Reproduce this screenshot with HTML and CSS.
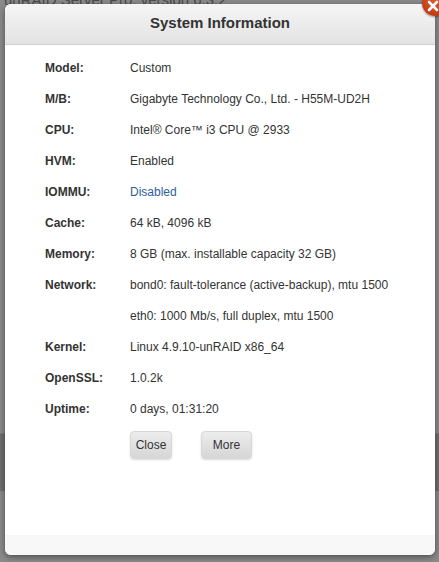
FILE: index.html
```html
<!DOCTYPE html>
<html>
<head>
<meta charset="utf-8">
<link rel="stylesheet" href="styles.css">
</head>
<body>
<div class="page">
  <div class="page-title">unRAID Server Pro, version 6.3.2</div>
  <div class="page-band"></div>
</div>
<div class="modal">
  <div class="modal-head">System Information</div>
  <div class="modal-body">
    <div class="info">
      <div class="lbl">Model:</div><div class="val">Custom</div>
      <div class="lbl">M/B:</div><div class="val">Gigabyte Technology Co., Ltd. - H55M-UD2H</div>
      <div class="lbl">CPU:</div><div class="val">Intel® Core™ i3 CPU @ 2933</div>
      <div class="lbl">HVM:</div><div class="val">Enabled</div>
      <div class="lbl">IOMMU:</div><div class="val link">Disabled</div>
      <div class="lbl">Cache:</div><div class="val">64 kB, 4096 kB</div>
      <div class="lbl">Memory:</div><div class="val">8 GB (max. installable capacity 32 GB)</div>
      <div class="lbl">Network:</div><div class="val">bond0: fault-tolerance (active-backup), mtu 1500</div>
      <div class="lbl"></div><div class="val">eth0: 1000 Mb/s, full duplex, mtu 1500</div>
      <div class="lbl">Kernel:</div><div class="val">Linux 4.9.10-unRAID x86_64</div>
      <div class="lbl">OpenSSL:</div><div class="val">1.0.2k</div>
      <div class="lbl">Uptime:</div><div class="val">0 days, 01:31:20</div>
    </div>
    <div class="buttons">
      <button class="btn btn-close">Close</button>
      <button class="btn btn-more">More</button>
    </div>
  </div>
  <div class="modal-foot"></div>
  <div class="close-x"><svg width="20" height="20" viewBox="0 0 20 20"><path d="M6 6 L14 14 M14 6 L6 14" stroke="#fff" stroke-width="2.6" stroke-linecap="round"/></svg></div>
</div>
</body>
</html>
```
FILE: styles.css
```css
html, body {
  margin: 0;
  padding: 0;
}
body {
  width: 439px;
  height: 562px;
  background: #8a8a8a;
  font-family: "Liberation Sans", Arial, sans-serif;
  overflow: hidden;
  position: relative;
}
.page {
  display: flex;
  flex-direction: column;
}
.page-title {
  margin-top: -8px;
  padding-left: 4px;
  font-size: 15px;
  color: #4a4a4a;
  line-height: 16px;
}
.page-band {
  margin-top: 425px;
  height: 57px;
  background: #6f6f6f;
  border-top: 1px solid #7a7a7a;
}
.modal {
  position: absolute;
  left: 5px;
  top: 4px;
  width: 430px;
  height: 551px;
  background: #fff;
  border-radius: 6px;
  box-shadow: 0 2px 6px rgba(0,0,0,0.45);
  display: flex;
  flex-direction: column;
}
.modal-head {
  height: 40px;
  line-height: 38px;
  text-align: center;
  font-size: 15px;
  font-weight: bold;
  color: #333;
  background: linear-gradient(#f5f5f5, #e3e3e3);
  border-bottom: 1px solid #cfcfcf;
  border-radius: 6px 6px 0 0;
}
.modal-body {
  flex: 1;
  padding: 16px 0 0 40px;
}
.info {
  display: grid;
  grid-template-columns: 85px 1fr;
  grid-auto-rows: 31px;
  font-size: 12px;
  color: #333;
  line-height: 14px;
}
.lbl {
  font-weight: bold;
}
.link {
  color: #2e5e9a;
}
.buttons {
  display: flex;
  gap: 29px;
  margin-left: 85px;
  margin-top: -2px;
}
.btn {
  font-family: "Liberation Sans", Arial, sans-serif;
  font-size: 12px;
  color: #333;
  height: 28px;
  padding: 0;
  border: 1px solid #d8d8d8;
  border-radius: 4px;
  background: linear-gradient(#ececec, #d6d6d6);
  box-shadow: 0 1px 2px rgba(0,0,0,0.15);
}
.btn-close {
  width: 42px;
}
.btn-more {
  width: 51px;
}
.modal-foot {
  height: 20px;
  background: #f8f8f8;
  border-radius: 0 0 6px 6px;
}
.close-x {
  position: absolute;
  right: -13px;
  top: -14px;
  width: 26px;
  height: 26px;
  border-radius: 50%;
  background: radial-gradient(circle at 50% 35%, #e0592b, #b8300c);
  display: flex;
  align-items: flex-end;
  justify-content: flex-start;
  box-shadow: 0 1px 2px rgba(0,0,0,0.4);
}
.close-x svg {
  margin: 0 0 0 1px;
}
```
